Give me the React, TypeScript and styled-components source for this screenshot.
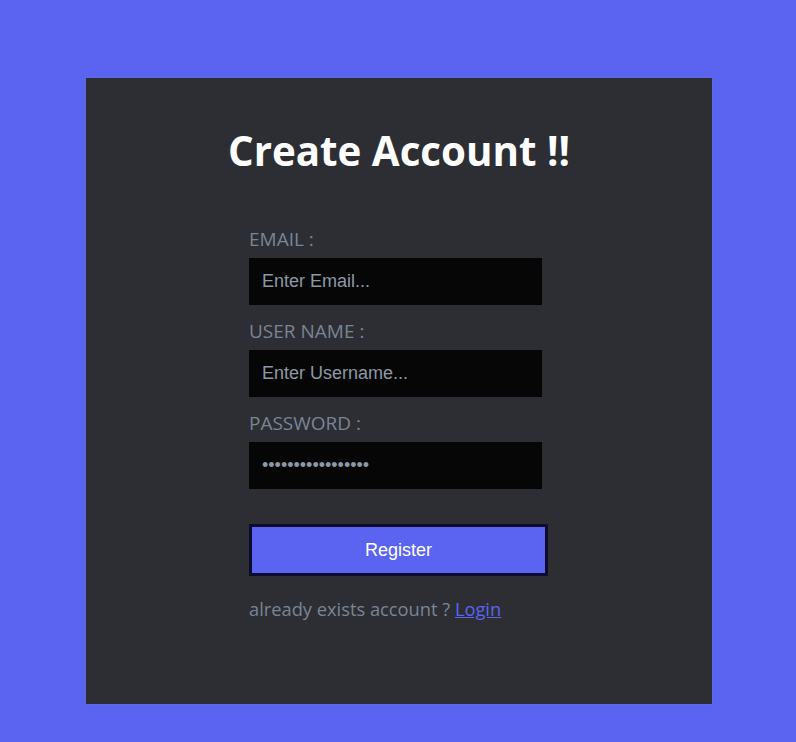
import React from "react";
import styled, { createGlobalStyle } from "styled-components";

const GlobalStyle = createGlobalStyle`
  html, body {
    margin: 0;
    padding: 0;
    background: #5a64f0;
  }
  body {
    min-height: 742px;
    font-family: "Open Sans", "Liberation Sans", sans-serif;
  }
`;

const Page = styled.main`
  display: flex;
  justify-content: center;
  padding: 78px 0 0 2px;
  min-height: 742px;
  box-sizing: border-box;
`;

const Card = styled.section`
  width: 626px;
  height: 626px;
  box-sizing: border-box;
  background: #2c2e33;
  box-shadow: 0 0 2px rgba(120, 130, 200, 0.5);
  padding-top: 48px;
  display: flex;
  flex-direction: column;
  align-items: center;
`;

const Title = styled.h1`
  margin: 0 0 50px;
  font-family: "Open Sans", sans-serif;
  font-weight: 700;
  font-size: 40.3px;
  line-height: 50px;
  color: #ffffff;
`;

const Form = styled.form`
  width: 300px;
  display: flex;
  flex-direction: column;
`;

const Field = styled.div`
  display: flex;
  flex-direction: column;
  margin-bottom: 13px;
`;

const Label = styled.label`
  display: block;
  font-family: "Open Sans", sans-serif;
  font-size: 19px;
  line-height: 26px;
  color: #7a8593;
  margin-bottom: 6px;
`;

const Input = styled.input`
  width: 293px;
  height: 47px;
  box-sizing: border-box;
  border: none;
  outline: none;
  background: #060606;
  padding: 0 13px;
  font-family: "Liberation Sans", Arial, sans-serif;
  font-size: 18px;
  color: #8d98a5;
  &::placeholder {
    color: #8d98a5;
  }
`;

const Button = styled.button`
  margin-top: 22px;
  width: 299px;
  height: 52px;
  box-sizing: border-box;
  border: 3px solid #0c0c30;
  background: #5a64f0;
  color: #ffffff;
  font-family: "Liberation Sans", Arial, sans-serif;
  font-size: 18px;
  cursor: pointer;
`;

const Footer = styled.p`
  margin: 20px 0 0;
  font-family: "Open Sans", sans-serif;
  font-size: 18.3px;
  line-height: 26px;
  color: #7a8593;
`;

const LoginLink = styled.a`
  color: #5a64f0;
  text-decoration: underline;
`;

export default function App() {
  return (
    <>
      <GlobalStyle />
      <Page>
        <Card>
          <Title>Create Account !!</Title>
          <Form onSubmit={(e) => e.preventDefault()}>
            <Field>
              <Label htmlFor="email">EMAIL :</Label>
              <Input id="email" type="email" placeholder="Enter Email..." />
            </Field>
            <Field>
              <Label htmlFor="username">USER NAME :</Label>
              <Input id="username" type="text" placeholder="Enter Username..." />
            </Field>
            <Field>
              <Label htmlFor="password">PASSWORD :</Label>
              <Input id="password" type="password" defaultValue="passwordpassword1" />
            </Field>
            <Button type="submit">Register</Button>
            <Footer>
              already exists account ? <LoginLink href="#">Login</LoginLink>
            </Footer>
          </Form>
        </Card>
      </Page>
    </>
  );
}
